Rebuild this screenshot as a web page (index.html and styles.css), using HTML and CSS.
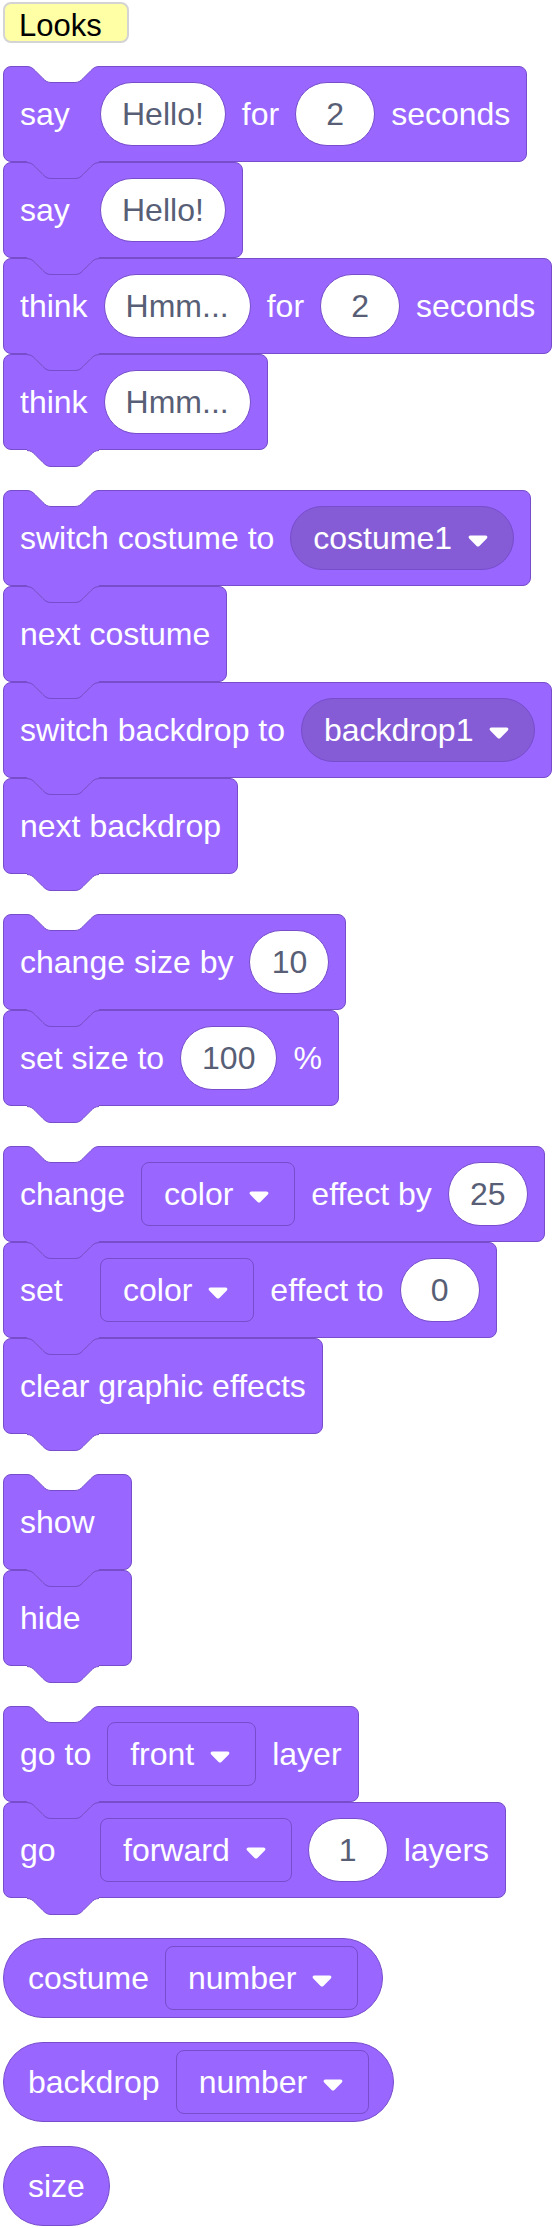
FILE: index.html
```html
<!DOCTYPE html>
<html lang="en">
<head>
<meta charset="utf-8">
<title>Looks</title>
<link rel="stylesheet" href="styles.css">
</head>
<body>
<svg class="defs" width="0" height="0" aria-hidden="true">
  <defs>
    <symbol id="notch" viewBox="0 0 74 18">
      <path d="M1,0 L1,0.5 c4,0 6,2 8,4 l8,8 c2,2 4,4 8,4 h24 c4,0 6,-2 8,-4 l8,-8 c2,-2 4,-4 8,-4 L73,0 Z" fill="#ffffff"/>
      <path d="M1,0.5 c4,0 6,2 8,4 l8,8 c2,2 4,4 8,4 h24 c4,0 6,-2 8,-4 l8,-8 c2,-2 4,-4 8,-4" fill="none" stroke="#774dcb" stroke-width="1"/>
    </symbol>
    <symbol id="tab" viewBox="0 0 74 19">
      <path d="M1,0 L1,1.5 c4,0 6,2 8,4 l8,8 c2,2 4,4 8,4 h24 c4,0 6,-2 8,-4 l8,-8 c2,-2 4,-4 8,-4 L73,0 Z" fill="#9966ff"/>
      <path d="M1,1.5 c4,0 6,2 8,4 l8,8 c2,2 4,4 8,4 h24 c4,0 6,-2 8,-4 l8,-8 c2,-2 4,-4 8,-4" fill="none" stroke="#774dcb" stroke-width="1"/>
    </symbol>
    <symbol id="arrow" viewBox="0 0 20 12">
      <path d="M2.5,0.5 H17.5 C19.3,0.5 20,2.3 18.8,3.6 L11.4,11 C10.6,11.8 9.4,11.8 8.6,11 L1.2,3.6 C0,2.3 0.7,0.5 2.5,0.5 Z" fill="#ffffff"/>
    </symbol>
  </defs>
</svg>

<main class="palette">
  <div class="category">Looks</div>

  <div class="stack">
    <div class="block">
      <svg class="notch"><use href="#notch"/></svg>
      <span class="lbl lead">say</span>
      <span class="field">Hello!</span>
      <span class="lbl">for</span>
      <span class="field num">2</span>
      <span class="lbl">seconds</span>
      <svg class="tab"><use href="#tab"/></svg>
    </div>
    <div class="block">
      <svg class="notch"><use href="#notch"/></svg>
      <span class="lbl lead">say</span>
      <span class="field">Hello!</span>
      <svg class="tab"><use href="#tab"/></svg>
    </div>
    <div class="block">
      <svg class="notch"><use href="#notch"/></svg>
      <span class="lbl lead">think</span>
      <span class="field">Hmm...</span>
      <span class="lbl">for</span>
      <span class="field num">2</span>
      <span class="lbl">seconds</span>
      <svg class="tab"><use href="#tab"/></svg>
    </div>
    <div class="block">
      <svg class="notch"><use href="#notch"/></svg>
      <span class="lbl lead">think</span>
      <span class="field">Hmm...</span>
      <svg class="tab"><use href="#tab"/></svg>
    </div>
  </div>

  <div class="stack">
    <div class="block">
      <svg class="notch"><use href="#notch"/></svg>
      <span class="lbl lead">switch costume to</span>
      <span class="menu round">costume1<svg class="arrow"><use href="#arrow"/></svg></span>
      <svg class="tab"><use href="#tab"/></svg>
    </div>
    <div class="block">
      <svg class="notch"><use href="#notch"/></svg>
      <span class="lbl">next costume</span>
      <svg class="tab"><use href="#tab"/></svg>
    </div>
    <div class="block">
      <svg class="notch"><use href="#notch"/></svg>
      <span class="lbl lead">switch backdrop to</span>
      <span class="menu round">backdrop1<svg class="arrow"><use href="#arrow"/></svg></span>
      <svg class="tab"><use href="#tab"/></svg>
    </div>
    <div class="block">
      <svg class="notch"><use href="#notch"/></svg>
      <span class="lbl">next backdrop</span>
      <svg class="tab"><use href="#tab"/></svg>
    </div>
  </div>

  <div class="stack">
    <div class="block">
      <svg class="notch"><use href="#notch"/></svg>
      <span class="lbl lead">change size by</span>
      <span class="field num">10</span>
      <svg class="tab"><use href="#tab"/></svg>
    </div>
    <div class="block">
      <svg class="notch"><use href="#notch"/></svg>
      <span class="lbl lead">set size to</span>
      <span class="field num">100</span>
      <span class="lbl">%</span>
      <svg class="tab"><use href="#tab"/></svg>
    </div>
  </div>

  <div class="stack">
    <div class="block">
      <svg class="notch"><use href="#notch"/></svg>
      <span class="lbl lead">change</span>
      <span class="menu">color<svg class="arrow"><use href="#arrow"/></svg></span>
      <span class="lbl">effect by</span>
      <span class="field num">25</span>
      <svg class="tab"><use href="#tab"/></svg>
    </div>
    <div class="block">
      <svg class="notch"><use href="#notch"/></svg>
      <span class="lbl lead">set</span>
      <span class="menu">color<svg class="arrow"><use href="#arrow"/></svg></span>
      <span class="lbl">effect to</span>
      <span class="field num">0</span>
      <svg class="tab"><use href="#tab"/></svg>
    </div>
    <div class="block">
      <svg class="notch"><use href="#notch"/></svg>
      <span class="lbl">clear graphic effects</span>
      <svg class="tab"><use href="#tab"/></svg>
    </div>
  </div>

  <div class="stack">
    <div class="block">
      <svg class="notch"><use href="#notch"/></svg>
      <span class="lbl">show</span>
      <svg class="tab"><use href="#tab"/></svg>
    </div>
    <div class="block">
      <svg class="notch"><use href="#notch"/></svg>
      <span class="lbl">hide</span>
      <svg class="tab"><use href="#tab"/></svg>
    </div>
  </div>

  <div class="stack">
    <div class="block">
      <svg class="notch"><use href="#notch"/></svg>
      <span class="lbl lead">go to</span>
      <span class="menu">front<svg class="arrow"><use href="#arrow"/></svg></span>
      <span class="lbl">layer</span>
      <svg class="tab"><use href="#tab"/></svg>
    </div>
    <div class="block">
      <svg class="notch"><use href="#notch"/></svg>
      <span class="lbl lead">go</span>
      <span class="menu">forward<svg class="arrow"><use href="#arrow"/></svg></span>
      <span class="field num">1</span>
      <span class="lbl">layers</span>
      <svg class="tab"><use href="#tab"/></svg>
    </div>
  </div>

  <div class="reporters">
    <div class="reporter">
      <span class="lbl">costume</span>
      <span class="menu">number<svg class="arrow"><use href="#arrow"/></svg></span>
    </div>
    <div class="reporter">
      <span class="lbl">backdrop</span>
      <span class="menu">number<svg class="arrow"><use href="#arrow"/></svg></span>
    </div>
    <div class="reporter">
      <span class="lbl">size</span>
    </div>
  </div>
</main>
</body>
</html>
```

FILE: styles.css
```css
html, body {
  margin: 0;
  padding: 0;
  background: #ffffff;
}

body {
  font-family: "Liberation Sans", Arial, Helvetica, sans-serif;
}

.defs {
  display: block;
  width: 0;
  height: 0;
  overflow: hidden;
}

.palette {
  display: flex;
  flex-direction: column;
  align-items: flex-start;
  padding: 2px 0 0 3px;
}

.category {
  box-sizing: border-box;
  width: 126px;
  height: 41px;
  padding: 4px 0 0 14px;
  background: #ffffa5;
  border: 2px solid #d4d4d4;
  border-radius: 8px;
  color: #000000;
  font-size: 31px;
  line-height: normal;
  margin-bottom: 23px;
}

.stack {
  display: flex;
  flex-direction: column;
  align-items: flex-start;
}

.stack + .stack {
  margin-top: 40px;
}

.block {
  position: relative;
  box-sizing: border-box;
  height: 96px;
  min-width: 129px;
  display: flex;
  align-items: center;
  gap: 16px;
  padding: 0 16px;
  background: #9966ff;
  border: 1px solid #774dcb;
  border-radius: 8px;
  color: #ffffff;
  font-size: 32px;
  white-space: nowrap;
}

.notch {
  position: absolute;
  left: 22px;
  top: -1px;
  width: 74px;
  height: 18px;
  z-index: 1;
  display: block;
}

.tab {
  position: absolute;
  left: 22px;
  top: 94px;
  width: 74px;
  height: 19px;
  z-index: 2;
  display: block;
}

.lbl {
  line-height: normal;
}

.lead {
  min-width: 64px;
}

.field {
  box-sizing: border-box;
  height: 64px;
  min-width: 80px;
  padding: 0 21px;
  display: flex;
  align-items: center;
  justify-content: center;
  background: #ffffff;
  border: 1px solid #774dcb;
  border-radius: 32px;
  color: #575e75;
}

.menu {
  box-sizing: border-box;
  height: 64px;
  padding: 0 25px 0 22px;
  display: flex;
  align-items: center;
  gap: 16px;
  border: 1px solid #774dcb;
  border-radius: 8px;
  color: #ffffff;
}

.menu.round {
  background: #855cd6;
  border-radius: 32px;
}

.arrow {
  display: block;
  width: 20px;
  height: 12px;
  margin-top: 6px;
}

.reporters {
  display: flex;
  flex-direction: column;
  align-items: flex-start;
  gap: 24px;
  margin-top: 40px;
}

.reporter {
  box-sizing: border-box;
  height: 80px;
  display: flex;
  align-items: center;
  gap: 16px;
  padding: 0 24px;
  background: #9966ff;
  border: 1px solid #774dcb;
  border-radius: 40px;
  color: #ffffff;
  font-size: 32px;
  white-space: nowrap;
}
```
